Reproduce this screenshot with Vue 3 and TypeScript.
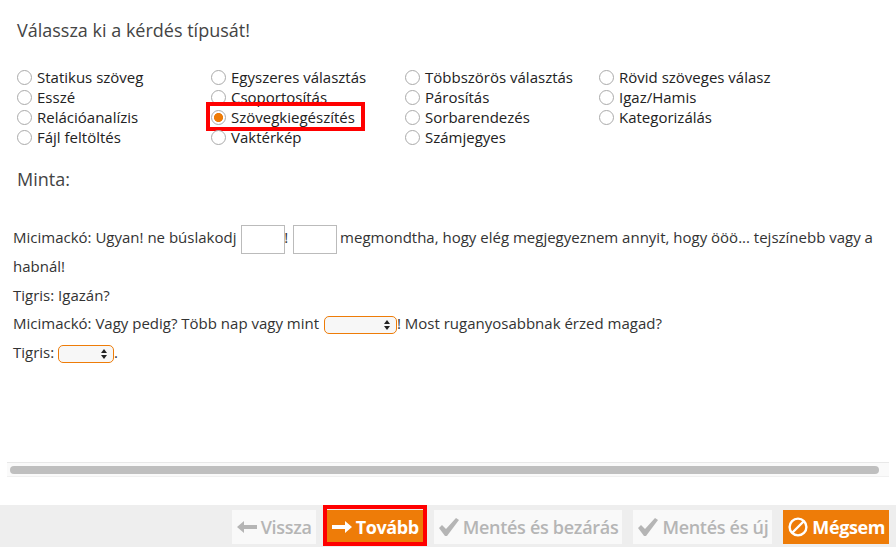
<template>
  <div class="page">
    <div class="content">
      <h3 class="title">Válassza ki a kérdés típusát!</h3>

      <div class="types">
        <label v-for="t in types" :key="t" class="type" :class="{ picked: t === selected }">
          <input v-model="selected" type="radio" name="qtype" :value="t" />
          <span>{{ t }}</span>
        </label>
      </div>

      <h3 class="sample-title">Minta:</h3>

      <div class="sample">
        <p>
          Micimackó: Ugyan! ne búslakodj <input class="gap" type="text" />! <input class="gap" type="text" />
          megmondtha, hogy elég megjegyeznem annyit, hogy ööö... tejszínebb vagy a
        </p>
        <p>habnál!</p>
        <p>Tigris: Igazán?</p>
        <p>
          Micimackó: Vagy pedig? Több nap vagy mint <select class="pick wide"></select>! Most ruganyosabbnak érzed magad?
        </p>
        <p>Tigris: <select class="pick narrow"></select>.</p>
      </div>
    </div>

    <div class="scroll-track"><div class="scroll-thumb"></div></div>

    <div class="actions">
      <button class="btn off">
        <svg width="20" height="14" viewBox="0 0 20 14"><path d="M0 7 L7 1 V5 H20 V9 H7 V13 Z" /></svg>
        Vissza
      </button>
      <button class="btn on marked">
        <svg width="20" height="14" viewBox="0 0 20 14"><path d="M20 7 L13 1 V5 H0 V9 H13 V13 Z" /></svg>
        Tovább
      </button>
      <button class="btn off">
        <svg width="20" height="18" viewBox="0 0 20 18"><path d="M0 10 L3 7 L7 11 L17 0 L20 2 L8 18 H6 Z" /></svg>
        Mentés és bezárás
      </button>
      <button class="btn off">
        <svg width="20" height="18" viewBox="0 0 20 18"><path d="M0 10 L3 7 L7 11 L17 0 L20 2 L8 18 H6 Z" /></svg>
        Mentés és új
      </button>
      <button class="btn on">
        <svg class="ban" width="20" height="20" viewBox="0 0 20 20">
          <circle cx="10" cy="10" r="8.4" />
          <line x1="4.5" y1="15.5" x2="15.5" y2="4.5" />
        </svg>
        Mégsem
      </button>
    </div>
  </div>
</template>

<script setup lang="ts">
import { ref } from 'vue';

// listed row by row, four to a row
const types: string[] = [
  'Statikus szöveg',
  'Egyszeres választás',
  'Többszörös választás',
  'Rövid szöveges válasz',
  'Esszé',
  'Csoportosítás',
  'Párosítás',
  'Igaz/Hamis',
  'Relációanalízis',
  'Szövegkiegészítés',
  'Sorbarendezés',
  'Kategorizálás',
  'Fájl feltöltés',
  'Vaktérkép',
  'Számjegyes',
];

const selected = ref<string>('Szövegkiegészítés');
</script>

<style>
html,
body {
  margin: 0;
  background: #fff;
  overflow: hidden;
}
</style>

<style scoped>
.page {
  height: 547px;
  display: flex;
  flex-direction: column;
  font-family: "Open Sans", sans-serif;
  color: #333;
}

.content {
  flex: 1;
  min-height: 0;
  padding: 0 13px;
}

.title {
  margin: 18px 0 0 4px;
  font-size: 18px;
  line-height: 24px;
  font-weight: 400;
  color: #444;
}

.types {
  margin: 25px 0 0 4px;
  display: grid;
  grid-template-columns: repeat(4, 194px);
  grid-auto-rows: 20px;
  font-size: 15px;
  color: #222;
}

.type {
  position: relative;
  display: flex;
  align-items: center;
  gap: 5px;
}

.type input {
  width: 15px;
  height: 15px;
  margin: 0;
  appearance: none;
  background: #fff;
  border: 1px solid #aaa;
  border-radius: 50%;
  box-sizing: border-box;
}

.type input:checked {
  background: radial-gradient(circle, #ee7c08 0 4.2px, #fff 4.9px);
}

.picked::after {
  content: '';
  position: absolute;
  left: -5px;
  top: -5px;
  width: 159px;
  height: 29px;
  box-sizing: border-box;
  border: 4px solid #f00;
  pointer-events: none;
}

.sample-title {
  margin: 20px 0 0 4px;
  font-size: 18px;
  line-height: 24px;
  font-weight: 400;
  color: #444;
}

.sample {
  margin-top: 32px;
  font-size: 15px;
  color: #333;
}

.sample p {
  margin: 0;
  line-height: 28.5px;
}

.gap {
  width: 44px;
  height: 29px;
  box-sizing: border-box;
  margin: 0 -1px -2px 1px;
  padding: 0;
  border: 1px solid #bbb;
  background: #fff;
  vertical-align: middle;
}

.pick {
  appearance: none;
  height: 18px;
  box-sizing: border-box;
  padding: 0;
  border: 1px solid #ee7c08;
  border-radius: 5px;
  vertical-align: middle;
  background: #f7f7f7 url("data:image/svg+xml,%3Csvg xmlns='http://www.w3.org/2000/svg' width='6' height='10'%3E%3Cpath d='M3 0 L6 4 H0 Z M3 10 L0 6 H6 Z' fill='%23222'/%3E%3C/svg%3E") no-repeat right 6px center;
}

.wide {
  width: 73px;
  margin-left: 1px;
}

.narrow {
  width: 56px;
}

.scroll-track {
  margin: 0 7px 0 7px;
  height: 15px;
  box-sizing: border-box;
  padding: 3px 10px 3px 3px;
  background: #fafafa;
  border-top: 1px solid #e8e8e8;
  border-bottom: 1px solid #f0f0f0;
}

.scroll-thumb {
  height: 8px;
  border-radius: 4px;
  background: #bfbfbf;
}

.actions {
  margin-top: 28px;
  height: 42px;
  box-sizing: border-box;
  padding: 5px 7px 3px 0;
  display: flex;
  justify-content: flex-end;
  gap: 11px;
  background: #eee;
}

.btn {
  position: relative;
  display: flex;
  align-items: center;
  gap: 4px;
  height: 34px;
  padding: 0 4px 0 5px;
  border: 0;
  font-family: "Open Sans", sans-serif;
  font-size: 18px;
  font-weight: 600;
  letter-spacing: -0.3px;
  white-space: nowrap;
}

.off {
  background: #f9f9f9;
  color: #b5b5b5;
}

.off svg {
  fill: #b5b5b5;
}

.on {
  background: #ee7c08;
  color: #fff;
  font-weight: 700;
  letter-spacing: -0.4px;
}

.on svg {
  fill: #fff;
}

.ban {
  stroke: #fff;
  stroke-width: 2.4;
  fill: none !important;
}

.marked::after {
  content: '';
  position: absolute;
  left: -4px;
  right: -4px;
  top: -5px;
  bottom: -2px;
  border: 4px solid #f00;
  pointer-events: none;
}
</style>
